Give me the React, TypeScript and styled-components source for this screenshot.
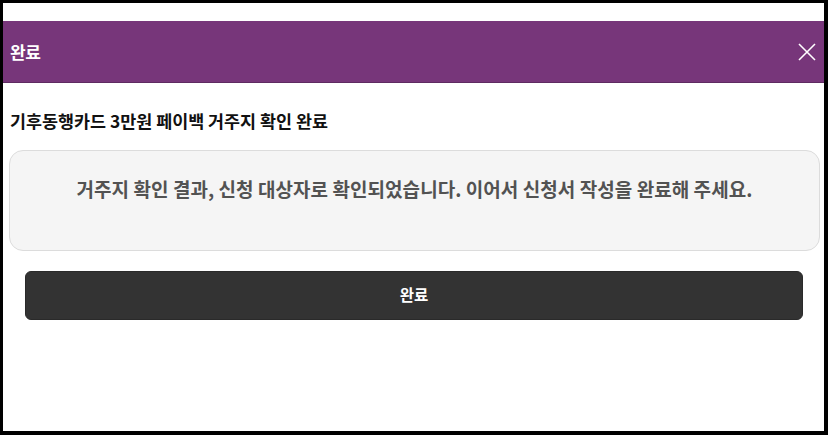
import React from 'react';
import styled, { createGlobalStyle } from 'styled-components';

const GlobalStyle = createGlobalStyle`
  html, body {
    margin: 0;
    padding: 0;
    background: #000;
  }
  body {
    font-family: "Noto Sans CJK KR", "Noto Sans", sans-serif;
  }
  * {
    box-sizing: border-box;
  }
`;

const Sheet = styled.div`
  margin: 3px 4px 0 3px;
  height: 428px;
  background: #fff;
  padding-top: 18px;
  display: flex;
  flex-direction: column;
`;

const Header = styled.header`
  display: flex;
  align-items: center;
  justify-content: space-between;
  height: 62px;
  padding: 0 4px 0 7px;
  background: #77367a;
  border-bottom: 1px solid #5e2a61;
`;

const HeaderTitle = styled.h1`
  margin: 0;
  font-size: 17px;
  font-weight: 700;
  color: #fff;
  letter-spacing: -0.3px;
`;

const CloseButton = styled.button`
  display: flex;
  align-items: center;
  justify-content: center;
  width: 26px;
  height: 26px;
  padding: 0;
  border: none;
  background: none;
  cursor: pointer;
`;

const Body = styled.div`
  display: flex;
  flex-direction: column;
  padding: 0 4px 0 6px;
`;

const Subtitle = styled.h2`
  margin: 25px 0 0 1px;
  height: 33px;
  font-size: 17.4px;
  font-weight: 700;
  color: #111;
`;

const Notice = styled.div`
  display: flex;
  align-items: flex-start;
  justify-content: center;
  height: 101px;
  margin-top: 9px;
  padding-top: 24px;
  border: 1px solid #dcdcdc;
  border-radius: 14px;
  background: #f5f5f5;
  font-size: 19px;
  font-weight: 700;
  color: #525252;
  letter-spacing: 0.05px;
`;

const Submit = styled.button`
  height: 49px;
  margin: 20px 17px 0 16px;
  padding: 0 0 3px;
  border: 1px solid #2a2a2a;
  border-radius: 6px;
  background: #333;
  color: #fff;
  font-family: inherit;
  font-size: 15.5px;
  font-weight: 700;
  cursor: pointer;
`;

const CloseIcon = () => (
  <svg width="20" height="20" viewBox="0 0 20 20" fill="none">
    <path d="M2 2L18 18M18 2L2 18" stroke="#fff" strokeWidth="1.6" />
  </svg>
);

export default function App() {
  return (
    <>
      <GlobalStyle />
      <Sheet>
        <Header>
          <HeaderTitle>완료</HeaderTitle>
          <CloseButton aria-label="닫기">
            <CloseIcon />
          </CloseButton>
        </Header>
        <Body>
          <Subtitle>기후동행카드 3만원 페이백 거주지 확인 완료</Subtitle>
          <Notice>거주지 확인 결과, 신청 대상자로 확인되었습니다. 이어서 신청서 작성을 완료해 주세요.</Notice>
          <Submit>완료</Submit>
        </Body>
      </Sheet>
    </>
  );
}
